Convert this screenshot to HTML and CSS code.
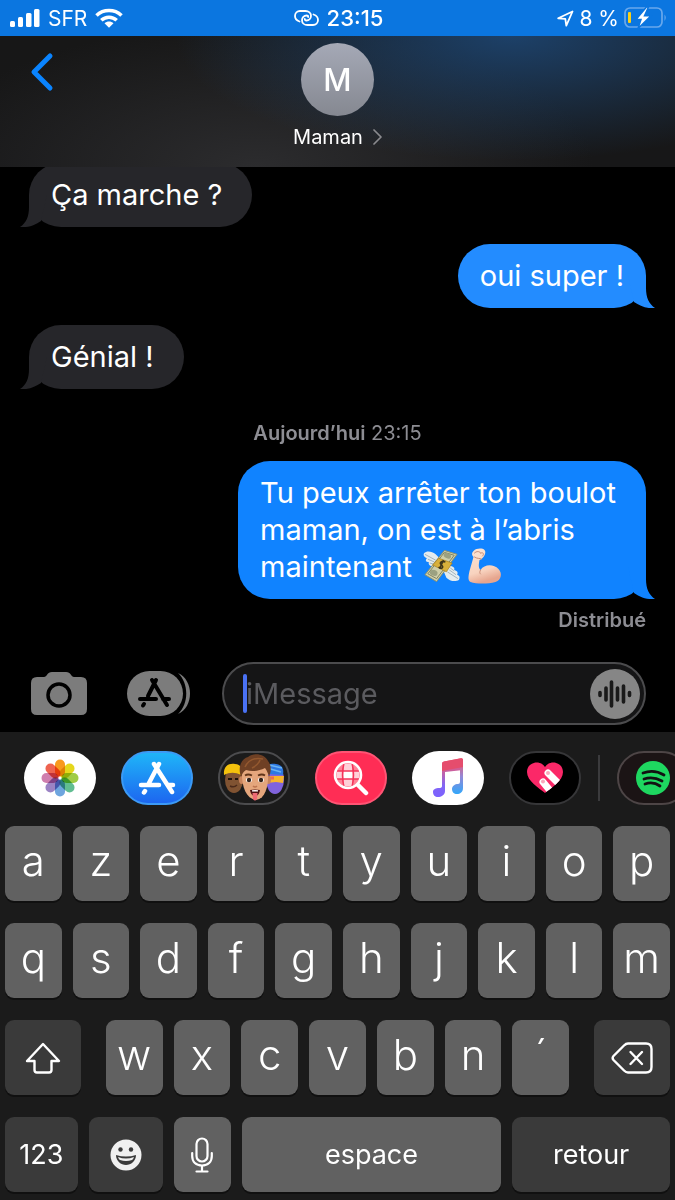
FILE: index.html
```html
<!DOCTYPE html>
<html lang="fr">
<head>
  <meta charset="UTF-8">
  <meta name="viewport" content="width=device-width, initial-scale=1.0">
  <title>Maman</title>
  <link rel="stylesheet" href="styles.css">
</head>
<body>
  <div class="status-bar">
    <div class="status-left">
      <svg width="30" height="20" viewBox="0 0 30 20" fill="#fff">
        <rect x="0" y="13" width="5" height="6" rx="1.5"/>
        <rect x="8" y="9" width="5" height="10" rx="1.5"/>
        <rect x="16" y="5" width="5.500" height="14" rx="1.5"/>
        <rect x="24" y="1" width="5.500" height="18" rx="1.5"/>
      </svg>
      <span>SFR</span>
      <svg width="28" height="20" viewBox="0 0 28 20" fill="none" stroke="#fff" stroke-width="3.600">
        <path d="M1.500 7.500C8.500 .9 19.500 .9 26.500 7.500"/>
        <path d="M6.300 12.300C10.700 8.200 17.300 8.200 21.700 12.300"/>
        <path d="M9.500 15.200C12.100 12.800 15.900 12.800 18.500 15.200L14 19.800Z" fill="#fff" stroke="none"/>
      </svg>
    </div>
    <div class="status-center">
      <svg width="25" height="16" viewBox="0 0 25 16" fill="none" stroke="#fff" stroke-width="1.800" stroke-linecap="round">
        <path d="M5.500 11.500C2.500 10.500 1 8.500 1 6C1 3 3.200 1 6 1H11.500C14.700 1 17 3 17 5.800C17 8.600 15 10.500 12.500 10.500C11.500 10.500 10.800 10 10.800 9"/>
        <path d="M19.500 4.500C22.500 5.500 24 7.500 24 10C24 13 21.800 15 19 15H13.500C10.300 15 8 13 8 10.200C8 7.400 10 5.500 12.500 5.500C13.500 5.500 14.200 6 14.200 7"/>
      </svg>
      <span>23:15</span>
    </div>
    <div class="status-right">
      <svg width="17" height="17" viewBox="0 0 17 17" fill="none" stroke="#fff" stroke-width="1.800" stroke-linejoin="round">
        <path d="M1.200 8.300L15.500 1.500L9.300 15.600L8.300 8.900Z"/>
      </svg>
      <span>8 %</span>
      <svg width="43" height="22" viewBox="0 0 43 22">
        <rect x="1" y="1" width="37" height="19" rx="5" fill="none" stroke="#69a8ec" stroke-width="1.700"/>
        <path d="M40.500 7.500Q43 10.500 40.500 14Z" fill="#69a8ec"/>
        <rect x="4" y="5" width="3" height="11" rx="1" fill="#fbd116"/>
        <path d="M22.500 0L12 12.500H17L14 21.500L27 8.800H20.500L24.500 0Z" fill="#fff" stroke="#0b76e0" stroke-width="1.500"/>
      </svg>
    </div>
  </div>

  <header class="header">
    <button class="back" aria-label="Retour">
      <svg width="24" height="40" viewBox="0 0 24 40" fill="none" stroke="#0a84ff" stroke-width="5" stroke-linecap="round" stroke-linejoin="round">
        <path d="M20 4L4 20L20 36"/>
      </svg>
    </button>
    <button class="contact">
      <span class="avatar">M</span>
      <span class="contact-name">
        Maman
        <svg width="9" height="16" viewBox="0 0 9 16" fill="none" stroke="#8a8a8e" stroke-width="1.700" stroke-linecap="round" stroke-linejoin="round">
          <path d="M1 1L8 8L1 15"/>
        </svg>
      </span>
    </button>
  </header>

  <main class="thread">
    <p class="bubble received">Ça marche ?</p>
    <p class="bubble sent light">oui super !</p>
    <p class="bubble received">Génial !</p>
    <div class="timestamp"><b>Aujourd’hui</b> 23:15</div>
    <p class="bubble sent">Tu peux arrêter ton boulot<br>maman, on est à l’abris<br>maintenant
      <svg class="emoji" viewBox="0 0 38 34" role="img" aria-label="billets avec des ailes">
        <path d="M1 4C4 1 9 2 13 5L18 10L12 18C8 18 5 16 6 13C3 13 2 11 4 9C1 8 0 6 1 4Z" fill="#e3ebee"/>
        <path d="M2 5L13 11M5 10L12 13M7 14L11 15" stroke="#9fb3bd" stroke-width="1"/>
        <path d="M37 31C33 34 27 32 24 29L21 22L27 17C31 17 33 19 32 21C36 22 36 24 35 26C38 27 38 29 37 31Z" fill="#e3ebee"/>
        <path d="M36 30L25 23M34 26L27 21M32 22L28 19" stroke="#9fb3bd" stroke-width="1"/>
        <path d="M22 1L35 5L14 33L2 26Z" fill="#cfcfa9" stroke="#8d906c" stroke-width="1"/>
        <path d="M22 3L32 6L14 30L5 25Z" fill="none" stroke="#7f8361" stroke-width="1"/>
        <ellipse cx="25" cy="6.500" rx="4" ry="2.500" fill="#9ba181" transform="rotate(25 25 6.500)"/>
        <ellipse cx="11" cy="24" rx="4" ry="3" fill="#9ba181" transform="rotate(20 11 24)"/>
        <path d="M16 9L30 14L24 23L10 16Z" fill="#d8b03b" stroke="#a67d1a" stroke-width=".7"/>
        <path d="M23 13C19 11 16 14 19 16C22 18 19 21 16 18M21 11L17 20" fill="none" stroke="#3d351b" stroke-width="1.600"/>
      </svg><svg class="emoji" viewBox="0 0 36 36" role="img" aria-label="biceps contracté">
        <defs>
          <linearGradient id="skin" x1="0" y1="0" x2=".3" y2="1">
            <stop offset="0" stop-color="#fde5d5"/>
            <stop offset=".7" stop-color="#f8d3bf"/>
            <stop offset="1" stop-color="#e6a58e"/>
          </linearGradient>
        </defs>
        <path d="M7 3C10 0 16 0 18 2C20 4 18 9 15 11L13 12C12 17 12 20 14 22C18 16 27 16 32 21C36 25 35 32 29 34C21 36 10 36 4 34C1 32 2 28 3 23L7 9C5 7 5 5 7 3Z" fill="url(#skin)"/>
        <path d="M8 5C10 3 13 3 14 5M14 5C17 4 18 6 16 8M8 9C11 11 13 10 15 11M14 22C13 24 13 25 14 26" fill="none" stroke="#c98e78" stroke-width="1" stroke-linecap="round"/>
      </svg>
    </p>
    <div class="delivered">Distribué</div>
  </main>

  <form class="composer">
    <button type="button" class="tool" aria-label="Appareil photo">
      <svg width="56" height="43" viewBox="0 0 56 43">
        <path d="M6 5H13C16 5 16 0 21 0H35C40 0 40 5 43 5H50Q56 5 56 11V37Q56 43 50 43H6Q0 43 0 37V11Q0 5 6 5Z" fill="#7c7c7c"/>
        <circle cx="28" cy="23" r="11" fill="none" stroke="#000" stroke-width="3.500"/>
      </svg>
    </button>
    <button type="button" class="tool apps" aria-label="Apps">
      <svg width="64" height="45" viewBox="0 0 64 45">
        <rect x="0" y="0" width="56" height="45" rx="22.500" fill="#7c7c7c"/>
        <path d="M51 2C67 9 67 36 51 43C62 33 62 12 51 2Z" fill="#7c7c7c"/>
        <g fill="none" stroke="#000" stroke-width="4" stroke-linecap="round">
          <path d="M29 9L21 25M25 9L40 34M13 28H29M36 28H42M17 33L16 34.500"/>
        </g>
      </svg>
    </button>
    <div class="field">
      <span class="caret"></span>
      <input type="text" placeholder="iMessage" aria-label="iMessage">
      <button type="button" class="voice" aria-label="Message audio">
        <svg width="50" height="50" viewBox="0 0 50 50">
          <circle cx="25" cy="25" r="25" fill="#868686"/>
          <path d="M10 23.500V26.500M16 19V31M21.500 13V37M27.500 19V31M33.500 17V33M39.500 23.500V26.500" stroke="#1a1a1a" stroke-width="3.600" stroke-linecap="round"/>
        </svg>
      </button>
    </div>
  </form>

  <section class="keyboard">
    <nav class="app-strip">
      <button class="app white" aria-label="Photos">
        <svg width="38" height="38" viewBox="-19 -19 38 38">
          <g class="petals">
            <rect x="-5" y="-18.500" width="10" height="17" rx="5" fill="#f8991d"/>
            <rect x="-5" y="-18.500" width="10" height="17" rx="5" fill="#e5d71c" transform="rotate(45)"/>
            <rect x="-5" y="-18.500" width="10" height="17" rx="5" fill="#a0cc45" transform="rotate(90)"/>
            <rect x="-5" y="-18.500" width="10" height="17" rx="5" fill="#61bd91" transform="rotate(135)"/>
            <rect x="-5" y="-18.500" width="10" height="17" rx="5" fill="#6ea5de" transform="rotate(180)"/>
            <rect x="-5" y="-18.500" width="10" height="17" rx="5" fill="#9b83c4" transform="rotate(225)"/>
            <rect x="-5" y="-18.500" width="10" height="17" rx="5" fill="#cf7fae" transform="rotate(270)"/>
            <rect x="-5" y="-18.500" width="10" height="17" rx="5" fill="#ee6350" transform="rotate(315)"/>
          </g>
        </svg>
      </button>
      <button class="app store" aria-label="App Store">
        <svg width="38" height="34" viewBox="0 0 38 34" fill="none" stroke="#fff" stroke-width="4.500" stroke-linecap="round">
          <path d="M21 3L11 22M16 3L34 31M3 24H21M30 24H35M7 30L6 31.500"/>
        </svg>
      </button>
      <button class="app outlined" aria-label="Memoji">
        <svg width="66" height="50" viewBox="0 0 66 50">
          <ellipse cx="13" cy="27" rx="9" ry="13" fill="#805332"/>
          <path d="M3 22C2 12 9 10 14 11C20 11 22 16 20 22C14 19 9 19 3 22Z" fill="#f4c20d"/>
          <path d="M7 26H11M14 26H17" stroke="#1e120b" stroke-width="2"/>
          <path d="M9 33Q13 35 16 32" fill="none" stroke="#4b2a1a" stroke-width="1.500"/>
          <ellipse cx="54" cy="27" rx="9" ry="14" fill="#8063dc"/>
          <path d="M45 21C45 11 50 10 55 11C62 12 63 17 62 22Z" fill="#2d78e2"/>
          <path d="M46 15L60 19M48 12L61 15" stroke="#6ab4f4" stroke-width="1.500"/>
          <path d="M45 23L63 23L62 30L55 29L46 30Z" fill="#f7b52b"/>
          <path d="M47 25H53" stroke="#ef6d4e" stroke-width="3"/>
          <ellipse cx="20.500" cy="27" rx="2.500" ry="4" fill="#c9845c"/>
          <ellipse cx="47.500" cy="27" rx="2.500" ry="4" fill="#c9845c"/>
          <path d="M21 14H47C48 30 46 45 35 47C24 45 20 32 21 14Z" fill="#e5a67c"/>
          <path d="M20 24C16 12 22 5 27 4C33 -1 44 1 47 8C51 13 50 19 48 24C47 20 46 18 44 15C38 18 31 19 25 17C22 19 21 21 20 24Z" fill="#6f4024"/>
          <path d="M24 14C27 7 34 4 42 6M31 15C35 13 38 10 39 7" fill="none" stroke="#93582f" stroke-width="1.500"/>
          <path d="M24 22.500Q27 20.500 31 22.500M37 22.500Q41 20.500 44 22.500" fill="none" stroke="#613519" stroke-width="1.800"/>
          <ellipse cx="28" cy="27" rx="3" ry="2.300" fill="#fff"/>
          <ellipse cx="40" cy="27" rx="3" ry="2.300" fill="#fff"/>
          <circle cx="28" cy="27" r="2.200" fill="#35231a"/>
          <circle cx="40" cy="27" r="2.200" fill="#35231a"/>
          <path d="M32 33Q34 35 36 33" fill="none" stroke="#be7650" stroke-width="1.500"/>
          <path d="M29 37Q34 36 39 37Q38 43 34 43Q30 43 29 37Z" fill="#4c1212"/>
          <path d="M31 37.300Q34 36.600 37 37.300V38.500H31Z" fill="#fff"/>
          <path d="M31.500 40H36.500L36 46Q34 49 32 46Z" fill="#ed6973"/>
        </svg>
      </button>
      <button class="app images" aria-label="#images">
        <svg width="36" height="36" viewBox="0 0 36 36">
          <circle cx="15" cy="15" r="12" fill="#ff8196"/>
          <path d="M11 4H19V11H11ZM4 11H11V19H4ZM19 11H26V19H19ZM11 19H19V26H11Z" fill="#ffd0d8"/>
          <path d="M11 11H19V19H11Z" fill="#fff"/>
          <path d="M3 11H27M3 19H27M11 3Q8 15 11 27M19 3Q22 15 19 27" fill="none" stroke="#f5335a" stroke-width="1.500"/>
          <circle cx="15" cy="15" r="13" fill="none" stroke="#fff" stroke-width="2.600"/>
          <path d="M25 25L33 33" stroke="#fff" stroke-width="4.500" stroke-linecap="round"/>
        </svg>
      </button>
      <button class="app white" aria-label="Musique">
        <svg width="32" height="40" viewBox="0 0 32 40">
          <defs>
            <linearGradient id="note" x1="0" y1="0" x2="0" y2="1">
              <stop offset="0" stop-color="#f74e63"/>
              <stop offset=".35" stop-color="#c661a4"/>
              <stop offset=".7" stop-color="#8265f5"/>
              <stop offset="1" stop-color="#7b62ff"/>
            </linearGradient>
            <linearGradient id="note-right" x1="0" y1="0" x2="0" y2="1">
              <stop offset="0" stop-color="#f74e63"/>
              <stop offset=".5" stop-color="#9488d6"/>
              <stop offset="1" stop-color="#32a7fa"/>
            </linearGradient>
          </defs>
          <path d="M10 6Q10 4 12 3.600L29 .3Q31 0 31 2V12L13 14V33C13 37 9 39 6 39C3 39 1 37 1 34C1 31 4 30 7 30Q10 30 10 28Z" fill="url(#note)"/>
          <path d="M28 2L31 1V30C31 34 28 36 25 36C22 36 20 34 20 31C20 28 23 26 26 26Q28 26 28 24Z" fill="url(#note-right)"/>
          <path d="M10 6Q10 4 12 3.600L29 .3Q31 0 31 2V9L10 13Z" fill="#e54d6d"/>
        </svg>
      </button>
      <button class="app black" aria-label="Digital Touch">
        <svg width="36" height="32" viewBox="0 0 36 32">
          <defs>
            <clipPath id="heart">
              <path d="M18 31C12 26 0 19 0 10C0 0 13-3 18 5C23-3 36 0 36 10C36 19 24 26 18 31Z"/>
            </clipPath>
          </defs>
          <g clip-path="url(#heart)">
            <rect width="36" height="32" fill="#fb2868"/>
            <path d="M16 20L25 31M21 11L33 23" stroke="#fff" stroke-width="7" stroke-linecap="round"/>
            <circle cx="16" cy="19.500" r="2" fill="#f9a9bd"/>
            <circle cx="21" cy="11" r="2" fill="#f9a9bd"/>
          </g>
        </svg>
      </button>
      <span class="divider"></span>
      <button class="app spotify" aria-label="Spotify">
        <svg width="34" height="34" viewBox="0 0 34 34">
          <circle cx="17" cy="17" r="17" fill="#1ed760"/>
          <path d="M7 12Q18 8 28 14M8 18Q17 15 26 20M9 23Q17 20 24 25" fill="none" stroke="#121212" stroke-width="2.800" stroke-linecap="round"/>
        </svg>
      </button>
    </nav>

    <div class="keys">
      <div class="row">
        <button class="key">a</button>
        <button class="key">z</button>
        <button class="key">e</button>
        <button class="key">r</button>
        <button class="key">t</button>
        <button class="key">y</button>
        <button class="key">u</button>
        <button class="key">i</button>
        <button class="key">o</button>
        <button class="key">p</button>
      </div>
      <div class="row">
        <button class="key">q</button>
        <button class="key">s</button>
        <button class="key">d</button>
        <button class="key">f</button>
        <button class="key">g</button>
        <button class="key">h</button>
        <button class="key">j</button>
        <button class="key">k</button>
        <button class="key">l</button>
        <button class="key">m</button>
      </div>
      <div class="row letters-bottom">
        <button class="key dark" aria-label="Majuscule">
          <svg width="36" height="32" viewBox="0 0 36 32" fill="none" stroke="#fff" stroke-width="2.400" stroke-linejoin="round">
            <path d="M18 2L34 19H26.500V28Q26.500 30.500 24 30.500H12Q9.500 30.500 9.500 28V19H2Z"/>
          </svg>
        </button>
        <button class="key first">w</button>
        <button class="key">x</button>
        <button class="key">c</button>
        <button class="key">v</button>
        <button class="key">b</button>
        <button class="key">n</button>
        <button class="key last">´</button>
        <button class="key dark" aria-label="Effacer">
          <svg width="42" height="32" viewBox="0 0 42 32" fill="none" stroke="#fff" stroke-width="2.400" stroke-linecap="round" stroke-linejoin="round">
            <path d="M17 1.500H35Q40.500 1.500 40.500 7V25Q40.500 30.500 35 30.500H17Q15 30.500 13 28.500L2.500 18Q.8 16 2.500 14L13 3.500Q15 1.500 17 1.500Z"/>
            <path d="M19.500 10L31 22M31 10L19.500 22"/>
          </svg>
        </button>
      </div>
      <div class="row bottom">
        <button class="key dark label">123</button>
        <button class="key dark" aria-label="Emoji">
          <svg width="32" height="32" viewBox="0 0 32 32">
            <circle cx="16" cy="16" r="15.500" fill="#f0f0f0"/>
            <circle cx="10.500" cy="10.500" r="2.200" fill="#3a3a3a"/>
            <circle cx="21" cy="10.500" r="2.200" fill="#3a3a3a"/>
            <path d="M6 16Q16 19 26 16C26 22 21 26 16 26C11 26 6 22 6 16Z" fill="#3a3a3a"/>
            <path d="M8 18Q16 21 24 18Q23 21 22 21Q16 23 10 21Q9 21 8 18Z" fill="#f0f0f0"/>
          </svg>
        </button>
        <button class="key" aria-label="Dictée">
          <svg width="22" height="36" viewBox="0 0 22 36" fill="none" stroke="#fff" stroke-width="2.200" stroke-linecap="round">
            <rect x="5.500" y="1.500" width="11" height="23" rx="5.500"/>
            <path d="M1.200 16V19C1.200 25 5 28.500 11 28.500C17 28.500 20.800 25 20.800 19V16M11 28.500V34M5.500 34.500H16.500"/>
          </svg>
        </button>
        <button class="key label">espace</button>
        <button class="key dark label">retour</button>
      </div>
    </div>
  </section>
</body>
</html>
```
FILE: styles.css
```css
* {
  margin: 0;
  padding: 0;
  box-sizing: border-box;
}

body {
  height: 100vh;
  display: flex;
  flex-direction: column;
  overflow: hidden;
  background: #000;
  color: #fff;
  font-family: Inter, "Liberation Sans", sans-serif;
}

button {
  border: none;
  background: none;
  color: inherit;
  font: inherit;
  cursor: pointer;
}

svg {
  display: block;
  flex-shrink: 0;
}

/* status bar */
.status-bar {
  flex-shrink: 0;
  display: grid;
  grid-template-columns: 1fr auto 1fr;
  align-items: center;
  height: 36px;
  padding: 0 8px 0 10px;
  background: #0b76e0;
  font-size: 21px;
}

.status-left,
.status-center,
.status-right {
  display: flex;
  align-items: center;
  gap: 8px;
}

.status-center {
  font-size: 22px;
  font-weight: 500;
}

.status-right {
  justify-content: flex-end;
  gap: 5px;
}

/* conversation header */
.header {
  flex-shrink: 0;
  display: grid;
  grid-template-columns: 1fr auto 1fr;
  align-items: start;
  height: 131px;
  padding: 7px 28px 0;
  background:
    radial-gradient(ellipse 50% 95% at 76% 0%, rgba(30, 75, 125, 0.8) 0%, transparent 100%),
    radial-gradient(ellipse 50% 110% at 38% 100%, #2c2c2e 0%, transparent 100%),
    linear-gradient(#171717, #171718);
}

.back {
  justify-self: start;
  padding: 9px 2px;
}

.contact {
  display: flex;
  flex-direction: column;
  align-items: center;
  gap: 9px;
}

.avatar {
  width: 73px;
  height: 73px;
  border-radius: 50%;
  background: linear-gradient(#a5a9b6, #858891);
  font-size: 31px;
  font-weight: 500;
  line-height: 74px;
}

.contact-name {
  display: flex;
  align-items: center;
  gap: 10px;
  font-size: 20px;
  line-height: 24px;
}

/* messages */
.thread {
  flex: 1;
  min-height: 0;
  display: flex;
  flex-direction: column;
  justify-content: flex-end;
  overflow: hidden;
  padding: 0 29px 22px;
}

.bubble {
  position: relative;
  flex-shrink: 0;
  margin-bottom: 17px;
  padding: 13px 30px 14px 22px;
  border-radius: 32px;
  font-size: 29px;
  line-height: 37px;
}

/* tail */
.bubble::after {
  content: '';
  position: absolute;
  bottom: 0;
  width: 32px;
  height: 36px;
  background: inherit;
  clip-path: path("M5 4H23V16C23 26 26 32 32 36C24 37 17 34 11 30Z");
}

.received {
  align-self: flex-start;
  background: #26262a;
}

.received::after {
  left: -9px;
  transform: scaleX(-1);
}

.sent {
  align-self: flex-end;
  margin-bottom: 9px;
  background: #1083ff;
}

.sent::after {
  right: -9px;
}

.sent.light {
  margin-bottom: 17px;
  padding-right: 22px;
  background: #238cff;
}

.emoji {
  display: inline-block;
  width: 37px;
  height: 36px;
  margin: 0 3px;
  vertical-align: -7px;
}

.timestamp {
  margin: 15px 0 16px;
  text-align: center;
  font-size: 20px;
  line-height: 24px;
  color: #8d8d93;
}

.timestamp b {
  font-weight: 600;
}

.delivered {
  text-align: right;
  font-size: 20px;
  font-weight: 600;
  line-height: 24px;
  color: #8d8d93;
}

/* composer */
.composer {
  flex-shrink: 0;
  display: flex;
  align-items: center;
  padding: 8px 29px 7px 31px;
}

.tool {
  margin-right: 40px;
}

.apps {
  margin-right: 31px;
}

.field {
  position: relative;
  flex: 1;
  min-width: 0;
  display: flex;
  align-items: center;
  height: 63px;
  padding: 0 4px 0 22px;
  border: 2px solid #4b4b4d;
  border-radius: 32px;
  background: #151516;
}

.field input {
  flex: 1;
  width: 100%;
  min-width: 0;
  border: none;
  outline: none;
  background: none;
  color: #fff;
  font: inherit;
  font-size: 29px;
}

.field input::placeholder {
  color: #5b5b5f;
  opacity: 1;
}

.voice {
  flex-shrink: 0;
}

.caret {
  position: absolute;
  left: 19px;
  width: 4px;
  height: 39px;
  border-radius: 2px;
  background: #4a72f5;
}

/* keyboard */
.keyboard {
  flex-shrink: 0;
  padding: 19px 5px 8px;
  background: #1b1b1b;
}

.app-strip {
  display: flex;
  align-items: center;
  gap: 25px;
  margin: 0 -5px 21px;
  padding-left: 24px;
  overflow: hidden;
}

.app {
  flex-shrink: 0;
  display: flex;
  align-items: center;
  justify-content: center;
  width: 72px;
  height: 54px;
  border-radius: 27px;
}

.white {
  background: #fff;
}

.store {
  border: 2px solid #3c9af5;
  background: linear-gradient(#1fb5f8, #1d66f0);
}

.outlined {
  border: 2px solid #4c4c4e;
}

.images {
  border: 2px solid #ff5474;
  background: #ff2d55;
}

.black {
  border: 2px solid #363638;
  background: #000;
}

.spotify {
  border: 2px solid #4d4546;
  background: #1b1415;
}

.divider {
  flex-shrink: 0;
  width: 2px;
  height: 46px;
  margin: 0 -8px;
  background: #3b3b3d;
}

.petals rect {
  mix-blend-mode: multiply;
}

.keys {
  display: flex;
  flex-direction: column;
  gap: 22px;
}

.row {
  display: grid;
  grid-template-columns: repeat(10, 1fr);
  gap: 11px;
}

/* narrow spacer columns set the side keys apart */
.letters-bottom {
  grid-template-columns: 76fr 3px repeat(7, 57fr) 3px 76fr;
}

.letters-bottom .first {
  grid-column: 3;
}

.letters-bottom .last + .key {
  grid-column: 11;
}

.bottom {
  grid-template-columns: 73fr 74fr 57fr 260fr 158fr;
}

.key {
  display: flex;
  align-items: center;
  justify-content: center;
  min-width: 0;
  height: 75px;
  padding-bottom: 6px;
  border-radius: 9px;
  background: #616161;
  box-shadow: 0 2px 0 #101010;
  font-size: 42px;
  font-weight: 300;
}

.key.dark {
  background: #3a3a3a;
}

.key.label {
  padding-bottom: 0;
  font-size: 27px;
  font-weight: 400;
}

.key:has(svg) {
  padding-bottom: 0;
}
```
